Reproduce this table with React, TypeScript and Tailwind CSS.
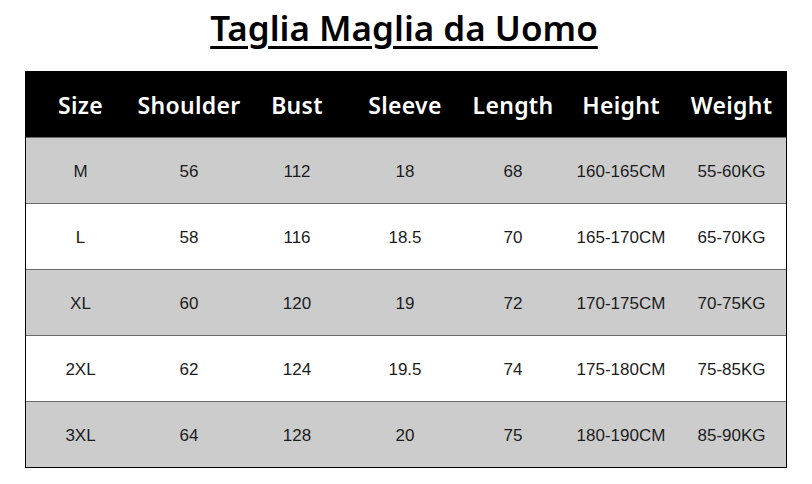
import React from "react";

const headers = ["Size", "Shoulder", "Bust", "Sleeve", "Length", "Height", "Weight"];
const rows = [
  ["M", "56", "112", "18", "68", "160-165CM", "55-60KG"],
  ["L", "58", "116", "18.5", "70", "165-170CM", "65-70KG"],
  ["XL", "60", "120", "19", "72", "170-175CM", "70-75KG"],
  ["2XL", "62", "124", "19.5", "74", "175-180CM", "75-85KG"],
  ["3XL", "64", "128", "20", "75", "180-190CM", "85-90KG"],
];

const cols = "grid grid-cols-[109px_108px_108px_108px_108px_108px_113px]";

export default function App() {
  return (
    <div className="w-[812px] h-[484px] bg-white flex flex-col items-center">
      <div className="h-[71px] flex items-start justify-center pt-[7px] pr-[4px]">
        <h1
          className="text-[35px] font-semibold text-black underline underline-offset-[5px] decoration-[3px] leading-[42px]"
          style={{ fontFamily: '"Noto Sans", "Open Sans", sans-serif' }}
        >
          Taglia Maglia da Uomo
        </h1>
      </div>
      <div className="w-[762px] border-x border-b border-black">
        <div className={`${cols} h-[66px] bg-black items-center`}>
          {headers.map((h) => (
            <div
              key={h}
              className="text-center text-white font-semibold text-[23px] tracking-[0.3px] pt-[2px]"
              style={{ fontFamily: '"Noto Sans", "Open Sans", sans-serif' }}
            >
              {h}
            </div>
          ))}
        </div>
        {rows.map((r, i) => (
          <div
            key={i}
            className={`${cols} h-[66px] items-center border-t border-[#6b6b6b] ${i % 2 === 0 ? "bg-[#cccccc]" : "bg-white"}`}
          >
            {r.map((c, j) => (
              <div
                key={j}
                className="text-center text-[17px] text-[#1c1c1c] pt-[3px]"
                style={{ fontFamily: '"Liberation Sans", Arial, sans-serif' }}
              >
                {c}
              </div>
            ))}
          </div>
        ))}
      </div>
    </div>
  );
}
